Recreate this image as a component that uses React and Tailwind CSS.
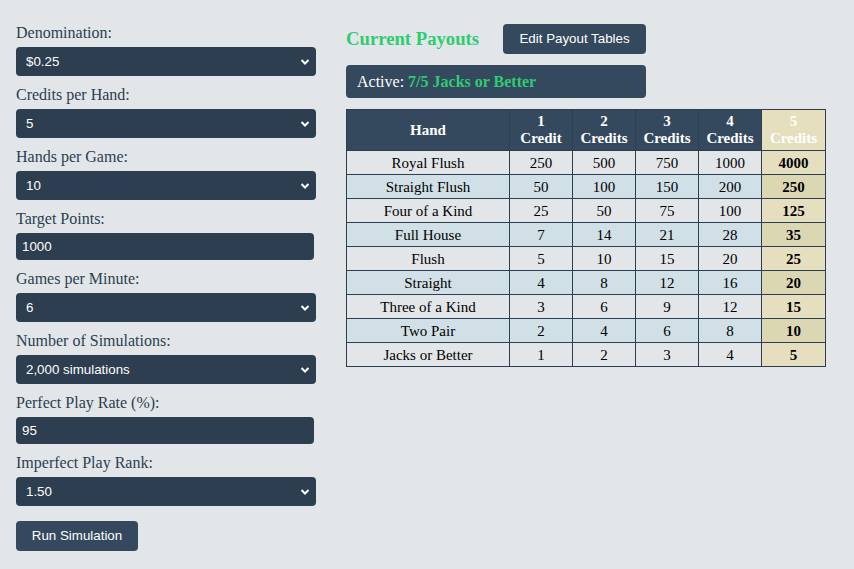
import React from "react";

const fields = [
  { label: "Denomination:", value: "$0.25", type: "select" },
  { label: "Credits per Hand:", value: "5", type: "select" },
  { label: "Hands per Game:", value: "10", type: "select" },
  { label: "Target Points:", value: "1000", type: "input" },
  { label: "Games per Minute:", value: "6", type: "select" },
  { label: "Number of Simulations:", value: "2,000 simulations", type: "select" },
  { label: "Perfect Play Rate (%):", value: "95", type: "input" },
  { label: "Imperfect Play Rank:", value: "1.50", type: "select" },
];

const payouts = [
  ["Royal Flush", 250, 500, 750, 1000, 4000],
  ["Straight Flush", 50, 100, 150, 200, 250],
  ["Four of a Kind", 25, 50, 75, 100, 125],
  ["Full House", 7, 14, 21, 28, 35],
  ["Flush", 5, 10, 15, 20, 25],
  ["Straight", 4, 8, 12, 16, 20],
  ["Three of a Kind", 3, 6, 9, 12, 15],
  ["Two Pair", 2, 4, 6, 8, 10],
  ["Jacks or Better", 1, 2, 3, 4, 5],
];

const Chevron = () => (
  <svg
    width="10"
    height="7"
    viewBox="0 0 10 7"
    className="absolute right-[6px] top-1/2 -translate-y-1/2 pointer-events-none"
  >
    <path d="M1.5 1.5 L5 5 L8.5 1.5" fill="none" stroke="white" strokeWidth="2" />
  </svg>
);

const Field = ({ label, value, type }) => (
  <div className="mb-[10px]">
    <label className="block mb-[5px] text-[16px] leading-[18px] text-[#2c3e50] font-['Liberation_Serif',serif]">
      {label}
    </label>
    {type === "select" ? (
      <div className="relative w-[300px]">
        <select
          defaultValue={value}
          className="appearance-none w-[300px] h-[29px] pl-[10px] rounded-[4px] bg-[#2c3e50] text-white text-[13.33px] font-['Liberation_Sans',sans-serif] outline-none"
        >
          <option>{value}</option>
        </select>
        <Chevron />
      </div>
    ) : (
      <input
        type="text"
        defaultValue={value}
        className="block w-[298px] h-[27px] px-[6px] rounded-[4px] bg-[#2c3e50] text-white text-[13.33px] font-['Liberation_Sans',sans-serif] outline-none"
      />
    )}
  </div>
);

export default function App() {
  return (
    <div className="min-h-[569px] bg-[#e2e6e9] flex gap-[30px] pt-[24px] pl-[16px]">
      {/* SETTINGS */}
      <div className="w-[300px] shrink-0">
        {fields.map((f) => (
          <Field key={f.label} {...f} />
        ))}
        <button className="mt-[5px] w-[122px] h-[30px] rounded-[4px] bg-[#34495e] text-white text-[13.33px] font-['Liberation_Sans',sans-serif]">
          Run Simulation
        </button>
      </div>

      {/* PAYOUTS */}
      <div>
        <div className="flex items-center gap-[24px]">
          <h2 className="whitespace-nowrap text-[18.7px] leading-[22px] font-bold text-[#2ecc71] font-['Liberation_Serif',serif]">
            Current Payouts
          </h2>
          <button className="shrink-0 w-[143px] h-[30px] rounded-[4px] bg-[#34495e] text-white text-[13.33px] font-['Liberation_Sans',sans-serif]">
            Edit Payout Tables
          </button>
        </div>
        <div className="mt-[11px] w-[300px] h-[33px] flex items-center px-[11px] rounded-[4px] bg-[#34495e] text-white text-[16px] font-['Liberation_Serif',serif]">
          Active:&nbsp;<span className="font-bold text-[#2ecc71]">7/5 Jacks or Better</span>
        </div>
        <table className="mt-[11px] border-collapse text-[15px] text-black font-['Liberation_Serif',serif] text-center">
          <thead>
            <tr className="h-[41px] bg-[#34495e] text-white font-bold leading-[17px]">
              <th className="w-[163px] p-0 border border-[#2c3e50]">Hand</th>
              <th className="w-[63px] p-0 border border-[#2c3e50]">1<br />Credit</th>
              <th className="w-[63px] p-0 border border-[#2c3e50]">2<br />Credits</th>
              <th className="w-[63px] p-0 border border-[#2c3e50]">3<br />Credits</th>
              <th className="w-[63px] p-0 border border-[#2c3e50]">4<br />Credits</th>
              <th className="w-[64px] p-0 border border-[#2c3e50] bg-[#e6dfbe]">5<br />Credits</th>
            </tr>
          </thead>
          <tbody>
            {payouts.map((row, i) => (
              <tr key={row[0]} className={i % 2 ? "h-[24px] bg-[#d1dfe6]" : "h-[24px] bg-[#e3e6e9]"}>
                {row.slice(0, 5).map((c, j) => (
                  <td key={j} className="border border-[#2c3e50] p-0 leading-[22px]">
                    {c}
                  </td>
                ))}
                <td className={`border border-[#2c3e50] p-0 leading-[22px] font-bold ${i % 2 ? "bg-[#dbd7b3]" : "bg-[#e6dfbf]"}`}>
                  {row[5]}
                </td>
              </tr>
            ))}
          </tbody>
        </table>
      </div>
    </div>
  );
}
